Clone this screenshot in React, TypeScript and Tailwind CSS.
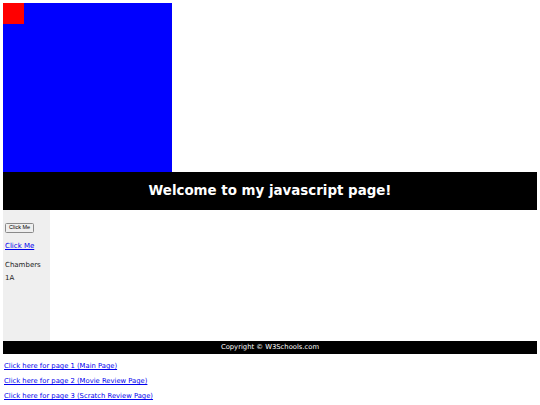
export default function App() {
    return (
        <div className="min-h-[405px] bg-white p-[3px] font-['DejaVu_Sans',sans-serif]">
            <div className="h-[169px] w-[169px] bg-[#0000ff]">
                <div className="h-[21px] w-[21px] bg-[#ff0000]" />
            </div>
            <header className="flex h-[38px] items-center justify-center bg-black">
                <h1 className="text-[13.4px] font-bold text-white">Welcome to my javascript page!</h1>
            </header>
            <div className="flex h-[131px]">
                <nav className="w-[47px] bg-[#efefef] px-[2px] pt-[12px] text-[7px] text-[#222]">
                    <button className="rounded-[1.5px] border border-[#8a8a8a] bg-[#efefef] px-[3px] py-[1.5px] font-['Liberation_Sans',sans-serif] text-[5.5px] leading-none text-black">
                        Click Me
                    </button>
                    <a href="#" className="mt-[9px] block text-[7px] leading-[9px] text-[#0000ee] underline">
                        Click Me
                    </a>
                    <p className="mt-[10px] leading-[9px]">Chambers</p>
                    <p className="mt-[4px] leading-[9px]">1A</p>
                </nav>
                <main className="flex-1" />
            </div>
            <footer className="flex h-[13px] items-center justify-center bg-black text-[6.8px] text-white">
                Copyright © W3Schools.com
            </footer>
            <div className="mt-[8px] flex flex-col gap-[6px] pl-[1px] text-[6.8px] leading-[9px]">
                <a href="#" className="text-[#0000ee] underline">Click here for page 1 (Main Page)</a>
                <a href="#" className="text-[#0000ee] underline">Click here for page 2 (Movie Review Page)</a>
                <a href="#" className="text-[#0000ee] underline">Click here for page 3 (Scratch Review Page)</a>
            </div>
        </div>
    );
}
